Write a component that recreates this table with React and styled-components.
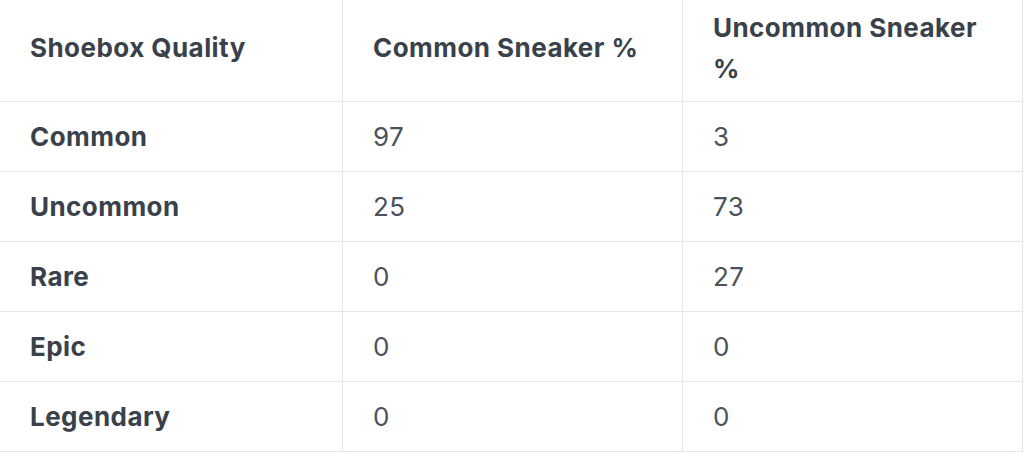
import React from 'react';
import styled, { createGlobalStyle } from 'styled-components';

const GlobalStyle = createGlobalStyle`
    html, body {
        margin: 0;
        padding: 0;
        background: #fff;
    }
    body {
        font-family: Inter, "Noto Sans", sans-serif;
        -webkit-font-smoothing: antialiased;
    }
`;

const Table = styled.div`
    width: 1023px;
    display: flex;
    flex-direction: column;
    font-size: 26px;
    line-height: 41px;
    letter-spacing: 0.45px;
`;

const Row = styled.div`
    display: grid;
    grid-template-columns: 342px 340px 341px;
    height: ${p => (p.$head ? '102px' : '70px')};
    box-sizing: border-box;
    border-bottom: 1px solid #e3e7ec;
`;

const Cell = styled.div`
    display: flex;
    align-items: center;
    box-sizing: border-box;
    padding: ${p => (p.$head ? '0 24px 6px 30px' : '0 24px 0 30px')};
    border-left: ${p => (p.$first ? 'none' : '1px solid #e3e7ec')};
    border-right: ${p => (p.$last ? '1px solid #e3e7ec' : 'none')};
    font-weight: ${p => (p.$bold ? 700 : 400)};
    color: ${p => (p.$bold ? '#39414a' : '#4a525b')};
`;

const columns = ['Shoebox Quality', 'Common Sneaker %', 'Uncommon Sneaker %'];

const rows = [
    ['Common', '97', '3'],
    ['Uncommon', '25', '73'],
    ['Rare', '0', '27'],
    ['Epic', '0', '0'],
    ['Legendary', '0', '0'],
];

const App = () => (
    <>
        <GlobalStyle />
        <Table>
            <Row $head>
                {columns.map((c, i) => (
                    <Cell key={c} $head $bold $first={i === 0} $last={i === columns.length - 1}>
                        {c}
                    </Cell>
                ))}
            </Row>
            {rows.map(r => (
                <Row key={r[0]}>
                    {r.map((v, i) => (
                        <Cell key={i} $bold={i === 0} $first={i === 0} $last={i === r.length - 1}>
                            {v}
                        </Cell>
                    ))}
                </Row>
            ))}
        </Table>
    </>
);

export default App;
